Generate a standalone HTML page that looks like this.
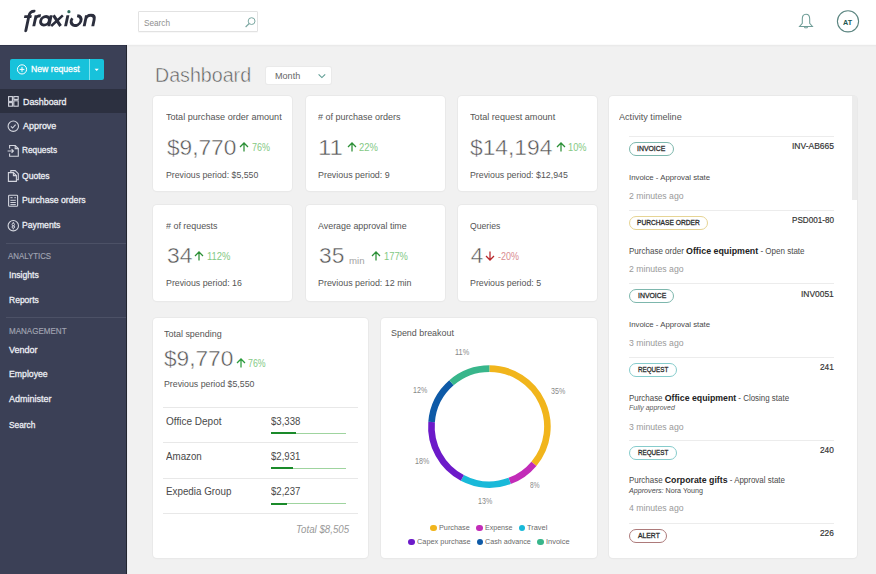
<!DOCTYPE html><html><head><meta charset="utf-8"><style>*{margin:0;padding:0;box-sizing:border-box}html,body{width:876px;height:574px;overflow:hidden;background:#f1f1f1;font-family:"Liberation Sans",sans-serif}.a{position:absolute;white-space:nowrap}</style></head><body><div class="a" style="left:0px;top:0px;width:876px;height:45px;background:#fff"></div><div class="a" style="left:0px;top:44px;width:876px;height:1px;background:#fbfbfb"></div><div class="a" style="left:0px;top:45px;width:876px;height:1px;background:#eaeaea"></div><div class="a" style="left:0px;top:46px;width:876px;height:1px;background:#eeeeee"></div><div class="a" style="left:0px;top:45px;width:126px;height:529px;background:#3b4056"></div><div class="a" style="left:125.5px;top:45px;width:1px;height:529px;background:#23262f"></div><div class="a" style="left:126.5px;top:45px;width:1px;height:529px;background:#e9eaf0"></div><div class="a" style="left:0px;top:45px;width:126px;height:1px;background:#30344a"></div><div class="a" style="left:0px;top:89px;width:126px;height:24px;background:#2c3040"></div><div class="a" style="left:10px;top:59px;width:94px;height:21px;background:#17c2db;border-radius:2px"></div><div class="a" style="left:89px;top:59px;width:1px;height:21px;background:#7fe3ef"></div><div class="a" style="left:6px;top:243px;width:120px;height:1px;background:#4c5166"></div><div class="a" style="left:6px;top:317px;width:120px;height:1px;background:#4c5166"></div><div class="a" style="left:153px;top:96px;width:139px;height:94.5px;background:#fff;border-radius:4px;box-shadow:0 0 0 1px #e9e9e9, 0 1px 2px rgba(0,0,0,0.03)"></div><div class="a" style="left:306px;top:96px;width:138.5px;height:94.5px;background:#fff;border-radius:4px;box-shadow:0 0 0 1px #e9e9e9, 0 1px 2px rgba(0,0,0,0.03)"></div><div class="a" style="left:458px;top:96px;width:139px;height:94.5px;background:#fff;border-radius:4px;box-shadow:0 0 0 1px #e9e9e9, 0 1px 2px rgba(0,0,0,0.03)"></div><div class="a" style="left:153px;top:205px;width:139px;height:95.5px;background:#fff;border-radius:4px;box-shadow:0 0 0 1px #e9e9e9, 0 1px 2px rgba(0,0,0,0.03)"></div><div class="a" style="left:306px;top:205px;width:138.5px;height:95.5px;background:#fff;border-radius:4px;box-shadow:0 0 0 1px #e9e9e9, 0 1px 2px rgba(0,0,0,0.03)"></div><div class="a" style="left:458px;top:205px;width:139px;height:95.5px;background:#fff;border-radius:4px;box-shadow:0 0 0 1px #e9e9e9, 0 1px 2px rgba(0,0,0,0.03)"></div><div class="a" style="left:608.5px;top:96px;width:248px;height:462px;background:#fff;border-radius:4px;box-shadow:0 0 0 1px #e9e9e9, 0 1px 2px rgba(0,0,0,0.03)"></div><div class="a" style="left:153px;top:318px;width:215px;height:240px;background:#fff;border-radius:4px;box-shadow:0 0 0 1px #e9e9e9, 0 1px 2px rgba(0,0,0,0.03)"></div><div class="a" style="left:381px;top:318px;width:216px;height:240px;background:#fff;border-radius:4px;box-shadow:0 0 0 1px #e9e9e9, 0 1px 2px rgba(0,0,0,0.03)"></div><div class="a" style="left:266px;top:67px;width:65px;height:17px;background:#fff;border-radius:2px;box-shadow:0 0 0 1px #eaeaea"></div><div class="a" style="left:138px;top:11px;width:120px;height:21px;background:#fff;border:1px solid #e2e2e2;border-radius:1px;box-shadow:0 1px 1px rgba(0,0,0,0.03)"></div><div class="a" style="left:163px;top:407px;width:195px;height:1px;background:#e8e8e8"></div><div class="a" style="left:163px;top:442px;width:195px;height:1px;background:#e8e8e8"></div><div class="a" style="left:163px;top:478px;width:195px;height:1px;background:#e8e8e8"></div><div class="a" style="left:163px;top:513px;width:195px;height:1px;background:#e8e8e8"></div><div class="a" style="left:271px;top:432.9px;width:75px;height:1px;background:#9fd49f"></div><div class="a" style="left:271px;top:432.4px;width:25.3px;height:2px;background:#1a8a2a"></div><div class="a" style="left:271px;top:467.9px;width:75px;height:1px;background:#9fd49f"></div><div class="a" style="left:271px;top:467.4px;width:22.3px;height:2px;background:#1a8a2a"></div><div class="a" style="left:271px;top:503.1px;width:75px;height:1px;background:#9fd49f"></div><div class="a" style="left:271px;top:502.6px;width:16.4px;height:2px;background:#1a8a2a"></div><div class="a" style="left:430.4px;top:524.5px;width:6.6px;height:6.6px;background:#f1b51c;border-radius:50%"></div><div class="a" style="left:476.0px;top:524.5px;width:6.6px;height:6.6px;background:#c22cb8;border-radius:50%"></div><div class="a" style="left:518.7px;top:524.5px;width:6.6px;height:6.6px;background:#19b9d9;border-radius:50%"></div><div class="a" style="left:408.2px;top:538.8000000000001px;width:6.6px;height:6.6px;background:#6c1ac9;border-radius:50%"></div><div class="a" style="left:476.5px;top:538.8000000000001px;width:6.6px;height:6.6px;background:#0e5aa7;border-radius:50%"></div><div class="a" style="left:537.2px;top:538.8000000000001px;width:6.6px;height:6.6px;background:#38b68b;border-radius:50%"></div><div class="a" style="left:851.5px;top:96px;width:5px;height:104px;background:#ececec"></div><div class="a" style="left:629px;top:136px;width:205px;height:1px;background:#ececec"></div><div class="a" style="left:629px;top:210px;width:205px;height:1px;background:#ececec"></div><div class="a" style="left:629px;top:283px;width:205px;height:1px;background:#ececec"></div><div class="a" style="left:629px;top:357px;width:205px;height:1px;background:#ececec"></div><div class="a" style="left:629px;top:440px;width:205px;height:1px;background:#ececec"></div><div class="a" style="left:629px;top:523px;width:205px;height:1px;background:#ececec"></div><div class="a" style="left:628.7px;top:141.6px;width:45.3px;height:14.5px;border:1.4px solid #7db7ad;border-radius:8px;background:#fff"></div><div class="a" style="left:628.7px;top:215.5px;width:79.8px;height:14.5px;border:1.4px solid #e6d494;border-radius:8px;background:#fff"></div><div class="a" style="left:629px;top:288.8px;width:45px;height:14.5px;border:1.4px solid #7db7ad;border-radius:8px;background:#fff"></div><div class="a" style="left:629px;top:362.5px;width:48.2px;height:14.5px;border:1.4px solid #86cccc;border-radius:8px;background:#fff"></div><div class="a" style="left:629px;top:445.8px;width:48.2px;height:14.5px;border:1.4px solid #86cccc;border-radius:8px;background:#fff"></div><div class="a" style="left:629px;top:528.6px;width:37.8px;height:14.5px;border:1.4px solid #ad7a7a;border-radius:8px;background:#fff"></div><svg class="a" style="left:238.5px;top:142.4px" width="10" height="10" viewBox="0 0 10 10"><path d="M5 9.5V1M1 5L5 1L9 5" fill="none" stroke="#2b8f36" stroke-width="1.25"/></svg><svg class="a" style="left:346.5px;top:142.4px" width="10" height="10" viewBox="0 0 10 10"><path d="M5 9.5V1M1 5L5 1L9 5" fill="none" stroke="#2b8f36" stroke-width="1.25"/></svg><svg class="a" style="left:555.5px;top:142.4px" width="10" height="10" viewBox="0 0 10 10"><path d="M5 9.5V1M1 5L5 1L9 5" fill="none" stroke="#2b8f36" stroke-width="1.25"/></svg><svg class="a" style="left:194.1px;top:250.9px" width="10" height="10" viewBox="0 0 10 10"><path d="M5 9.5V1M1 5L5 1L9 5" fill="none" stroke="#2b8f36" stroke-width="1.25"/></svg><svg class="a" style="left:371.3px;top:250.9px" width="10" height="10" viewBox="0 0 10 10"><path d="M5 9.5V1M1 5L5 1L9 5" fill="none" stroke="#2b8f36" stroke-width="1.25"/></svg><svg class="a" style="left:485.4px;top:250.9px" width="10" height="10" viewBox="0 0 10 10"><path d="M5 0.5V9M1 5L5 9L9 5" fill="none" stroke="#b8262b" stroke-width="1.25"/></svg><svg class="a" style="left:236px;top:358px" width="10" height="10" viewBox="0 0 10 10"><path d="M5 9.5V1M1 5L5 1L9 5" fill="none" stroke="#2a9b3b" stroke-width="1.25"/></svg><svg class="a" style="left:0;top:0" width="876" height="574"><path d="M489.40 368.60A58 58 0 0 1 533.90 463.80" fill="none" stroke="#f1b51c" stroke-width="6.6"/><path d="M533.90 463.80A58 58 0 0 1 509.63 480.96" fill="none" stroke="#c22cb8" stroke-width="6.6"/><path d="M509.63 480.96A58 58 0 0 1 462.32 477.89" fill="none" stroke="#19b9d9" stroke-width="6.6"/><path d="M462.32 477.89A58 58 0 0 1 431.59 421.91" fill="none" stroke="#6c1ac9" stroke-width="6.6"/><path d="M431.59 421.91A58 58 0 0 1 451.48 382.71" fill="none" stroke="#0e5aa7" stroke-width="6.6"/><path d="M451.48 382.71A58 58 0 0 1 489.40 368.60" fill="none" stroke="#38b68b" stroke-width="6.6"/></svg><svg class="a" style="left:0;top:0" width="110" height="44" viewBox="0 0 110 44"><g transform="translate(0 26) skewX(-12) translate(0 -26)" fill="none" stroke="#2b2e3d" stroke-width="2.9"><path d="M26.8 30.8V15.6C26.8 12.6 28.2 11.2 30.9 11.2" stroke-linecap="round"/><path d="M22.2 16.6H29.6"/><path d="M33.8 26.2V15.2M33.8 20.4C33.8 16.8 35.5 15.7 38.6 15.7" /><circle cx="43.9" cy="20.8" r="4.3"/><path d="M48.9 15.2V26.2"/><path d="M51.2 15.4L60.6 26M60.6 15.4L51.2 26" stroke-width="2.8"/><path d="M65.6 15.2V26.2"/><path d="M75.00 15.75A4.9 4.9 0 1 1 70.71 18.22"/><path d="M84.2 26.2V15.2M84.2 19.8C84.2 16.6 86 15.3 88.5 15.3C91.3 15.3 92.8 16.9 92.8 19.8V26.2"/></g><circle cx="68.9" cy="11.7" r="1.6" fill="#2e6b5c"/></svg><svg class="a" style="left:0;top:45px" width="126" height="200" viewBox="0 45 126 200"><circle cx="22" cy="69.4" r="4.6" fill="none" stroke="#fff" stroke-width="1"/><path d="M22 67V71.8M19.6 69.4H24.4" stroke="#fff" stroke-width="1"/><path d="M94.6 68.8H98.8L96.7 71Z" fill="#fff"/><g fill="none" stroke="#d3d5de" stroke-width="1.1"><rect x="8.6" y="96.6" width="3.8" height="4.8"/><rect x="13.8" y="96.6" width="4.4" height="2.8"/><rect x="8.6" y="102.6" width="3.8" height="3.6"/><rect x="13.8" y="100.8" width="4.4" height="5.4"/><circle cx="13.3" cy="126.2" r="5.2"/><path d="M10.9 126.4L12.6 128L15.6 124.6"/><path d="M9.6 148.6V145.5H15.2L18.3 148.6V156.2H9.6V153.4"/><path d="M15.2 145.5V148.6H18.3"/><path d="M7.6 151H13.4M11.6 149.2L13.4 151L11.6 152.8"/><path d="M8.4 172.6H13.4L16.4 175.6V181.4H8.4Z"/><path d="M13.4 172.6V175.6H16.4"/><path d="M10.8 172.6V170.6H15.2L18.3 173.7V179.8H16.4"/><rect x="8.6" y="195.3" width="9" height="11" rx="0.8"/><path d="M10.4 197.7H12.6M14.4 197.7H15.8M10.4 200.3H15.8M10.4 202.5H15.8M10.4 204.6H15.8" stroke-width="1"/><circle cx="13.3" cy="225.7" r="5.2"/><ellipse cx="13.3" cy="224.5" rx="1.2" ry="1.3" stroke-width="1"/><ellipse cx="13.3" cy="227" rx="1.2" ry="1.3" stroke-width="1"/><path d="M13.3 222V223.2M13.3 228.3V229.5" stroke-width="0.9"/></g></svg><svg class="a" style="left:244px;top:16px" width="13" height="12" viewBox="0 0 13 12"><circle cx="7.6" cy="5.1" r="3.4" fill="none" stroke="#7aa7a1" stroke-width="1"/><path d="M5.2 7.5L1.6 11" stroke="#7aa7a1" stroke-width="1.1"/></svg><svg class="a" style="left:798px;top:12px" width="16" height="18" viewBox="0 0 16 18"><path d="M8 2.2C5.2 2.2 4.3 4.4 4.3 7V11.4L1.6 14.4H14.4L11.7 11.4V7C11.7 4.4 10.8 2.2 8 2.2Z" fill="none" stroke="#6f9d97" stroke-width="1.05"/><path d="M6.6 14.6V15.8H9.4V14.6" fill="none" stroke="#6f9d97" stroke-width="1"/></svg><svg class="a" style="left:836px;top:9px" width="24" height="24" viewBox="0 0 24 24"><circle cx="12" cy="12.3" r="10.6" fill="none" stroke="#5b8580" stroke-width="1.1"/></svg><svg class="a" style="left:317px;top:73px" width="10" height="6" viewBox="0 0 10 6"><path d="M1.6 1.4L4.9 4.6L8.2 1.4" fill="none" stroke="#5d9c93" stroke-width="1.1"/></svg><div class="a" id="t0" style="left:144.40px;top:18.88px;font-size:9px;line-height:9px;color:#8f8f8f;font-weight:400;font-style:normal;transform:scaleX(0.9119);transform-origin:0 0;">Search</div><div class="a" id="t1" style="left:843.00px;top:19.81px;font-size:6.6px;line-height:6.6px;color:#24564f;font-weight:700;font-style:normal;transform:scaleX(1.0880);transform-origin:0 0;">AT</div><div class="a" id="t2" style="left:155.02px;top:65.07px;font-size:20px;line-height:20px;color:#5e5e5e;font-weight:400;font-style:normal;transform:scaleX(0.9820);transform-origin:0 0;-webkit-text-stroke:0.5px #f1f1f1;">Dashboard</div><div class="a" id="t3" style="left:275.00px;top:71.55px;font-size:8.8px;line-height:8.8px;color:#666;font-weight:400;font-style:normal;transform:scaleX(1.0303);transform-origin:0 0;">Month</div><div class="a" id="t4" style="left:30.80px;top:64.81px;font-size:9.2px;line-height:9.2px;color:#ffffff;font-weight:400;font-style:normal;transform:scaleX(0.9438);transform-origin:0 0;-webkit-text-stroke:0.3px #fff;">New request</div><div class="a" id="t5" style="left:22.80px;top:96.54px;font-size:9.4px;line-height:9.4px;color:#eceef4;font-weight:400;font-style:normal;transform:scaleX(0.9463);transform-origin:0 0;-webkit-text-stroke:0.3px #eceef4;">Dashboard</div><div class="a" id="t6" style="left:22.80px;top:121.04px;font-size:9.4px;line-height:9.4px;color:#eceef4;font-weight:400;font-style:normal;transform:scaleX(0.9538);transform-origin:0 0;-webkit-text-stroke:0.3px #eceef4;">Approve</div><div class="a" id="t7" style="left:22.30px;top:145.44px;font-size:9.4px;line-height:9.4px;color:#eceef4;font-weight:400;font-style:normal;transform:scaleX(0.8843);transform-origin:0 0;-webkit-text-stroke:0.3px #eceef4;">Requests</div><div class="a" id="t8" style="left:22.30px;top:170.54px;font-size:9.4px;line-height:9.4px;color:#eceef4;font-weight:400;font-style:normal;transform:scaleX(0.9136);transform-origin:0 0;-webkit-text-stroke:0.3px #eceef4;">Quotes</div><div class="a" id="t9" style="left:21.70px;top:195.44px;font-size:9.4px;line-height:9.4px;color:#eceef4;font-weight:400;font-style:normal;transform:scaleX(0.9248);transform-origin:0 0;-webkit-text-stroke:0.3px #eceef4;">Purchase orders</div><div class="a" id="t10" style="left:22.30px;top:220.04px;font-size:9.4px;line-height:9.4px;color:#eceef4;font-weight:400;font-style:normal;transform:scaleX(0.9215);transform-origin:0 0;-webkit-text-stroke:0.3px #eceef4;">Payments</div><div class="a" id="t11" style="left:8.40px;top:252.08px;font-size:9px;line-height:9px;color:#a2a5b3;font-weight:400;font-style:normal;transform:scaleX(0.8735);transform-origin:0 0;-webkit-text-stroke:0.15px #a2a5b3;">ANALYTICS</div><div class="a" id="t12" style="left:9.10px;top:270.04px;font-size:9.4px;line-height:9.4px;color:#eceef4;font-weight:400;font-style:normal;transform:scaleX(0.9227);transform-origin:0 0;-webkit-text-stroke:0.3px #eceef4;">Insights</div><div class="a" id="t13" style="left:9.10px;top:295.34px;font-size:9.4px;line-height:9.4px;color:#eceef4;font-weight:400;font-style:normal;transform:scaleX(0.9083);transform-origin:0 0;-webkit-text-stroke:0.3px #eceef4;">Reports</div><div class="a" id="t14" style="left:8.60px;top:327.18px;font-size:9px;line-height:9px;color:#a2a5b3;font-weight:400;font-style:normal;transform:scaleX(0.8922);transform-origin:0 0;-webkit-text-stroke:0.15px #a2a5b3;">MANAGEMENT</div><div class="a" id="t15" style="left:9.00px;top:345.04px;font-size:9.4px;line-height:9.4px;color:#eceef4;font-weight:400;font-style:normal;transform:scaleX(0.9631);transform-origin:0 0;-webkit-text-stroke:0.3px #eceef4;">Vendor</div><div class="a" id="t16" style="left:9.10px;top:369.44px;font-size:9.4px;line-height:9.4px;color:#eceef4;font-weight:400;font-style:normal;transform:scaleX(0.9283);transform-origin:0 0;-webkit-text-stroke:0.3px #eceef4;">Employee</div><div class="a" id="t17" style="left:9.10px;top:394.24px;font-size:9.4px;line-height:9.4px;color:#eceef4;font-weight:400;font-style:normal;transform:scaleX(0.9578);transform-origin:0 0;-webkit-text-stroke:0.3px #eceef4;">Administer</div><div class="a" id="t18" style="left:9.10px;top:419.64px;font-size:9.4px;line-height:9.4px;color:#eceef4;font-weight:400;font-style:normal;transform:scaleX(0.8884);transform-origin:0 0;-webkit-text-stroke:0.3px #eceef4;">Search</div><div class="a" id="t19" style="left:166.30px;top:113.48px;font-size:9px;line-height:9px;color:#555;font-weight:400;font-style:normal;transform:scaleX(1.0099);transform-origin:0 0;">Total purchase order amount</div><div class="a" id="t20" style="left:166.60px;top:136.95px;font-size:22.5px;line-height:22.5px;color:#555;font-weight:400;font-style:normal;transform:scaleX(1.0072);transform-origin:0 0;-webkit-text-stroke:0.45px #fff;">$9,770</div><div class="a" id="t21" style="left:251.50px;top:143.13px;font-size:10px;line-height:10px;color:#84c984;font-weight:400;font-style:normal;transform:scaleX(0.8995);transform-origin:0 0;">76%</div><div class="a" id="t22" style="left:166.30px;top:170.68px;font-size:9px;line-height:9px;color:#555;font-weight:400;font-style:normal;transform:scaleX(0.9710);transform-origin:0 0;">Previous period: $5,550</div><div class="a" id="t23" style="left:318.30px;top:113.48px;font-size:9px;line-height:9px;color:#555;font-weight:400;font-style:normal;transform:scaleX(0.9994);transform-origin:0 0;"># of purchase orders</div><div class="a" id="t24" style="left:317.53px;top:136.95px;font-size:22.5px;line-height:22.5px;color:#555;font-weight:400;font-style:normal;transform:scaleX(1.0667);transform-origin:0 0;-webkit-text-stroke:0.45px #fff;">11</div><div class="a" id="t25" style="left:358.50px;top:143.13px;font-size:10px;line-height:10px;color:#84c984;font-weight:400;font-style:normal;transform:scaleX(0.9442);transform-origin:0 0;">22%</div><div class="a" id="t26" style="left:318.30px;top:170.68px;font-size:9px;line-height:9px;color:#555;font-weight:400;font-style:normal;transform:scaleX(0.9885);transform-origin:0 0;">Previous period: 9</div><div class="a" id="t27" style="left:470.00px;top:113.48px;font-size:9px;line-height:9px;color:#555;font-weight:400;font-style:normal;transform:scaleX(1.0136);transform-origin:0 0;">Total request amount</div><div class="a" id="t28" style="left:470.30px;top:136.95px;font-size:22.5px;line-height:22.5px;color:#555;font-weight:400;font-style:normal;transform:scaleX(1.0121);transform-origin:0 0;-webkit-text-stroke:0.45px #fff;">$14,194</div><div class="a" id="t29" style="left:568.40px;top:143.13px;font-size:10px;line-height:10px;color:#84c984;font-weight:400;font-style:normal;transform:scaleX(0.9243);transform-origin:0 0;">10%</div><div class="a" id="t30" style="left:470.00px;top:170.68px;font-size:9px;line-height:9px;color:#555;font-weight:400;font-style:normal;transform:scaleX(0.9774);transform-origin:0 0;">Previous period: $12,945</div><div class="a" id="t31" style="left:166.20px;top:221.98px;font-size:9px;line-height:9px;color:#555;font-weight:400;font-style:normal;transform:scaleX(0.9899);transform-origin:0 0;"># of requests</div><div class="a" id="t32" style="left:166.50px;top:245.45px;font-size:22.5px;line-height:22.5px;color:#555;font-weight:400;font-style:normal;transform:scaleX(1.0158);transform-origin:0 0;-webkit-text-stroke:0.45px #fff;">34</div><div class="a" id="t33" style="left:207.40px;top:251.64px;font-size:10px;line-height:10px;color:#84c984;font-weight:400;font-style:normal;transform:scaleX(0.9422);transform-origin:0 0;">112%</div><div class="a" id="t34" style="left:166.20px;top:279.18px;font-size:9px;line-height:9px;color:#555;font-weight:400;font-style:normal;transform:scaleX(0.9788);transform-origin:0 0;">Previous period: 16</div><div class="a" id="t35" style="left:318.30px;top:221.98px;font-size:9px;line-height:9px;color:#555;font-weight:400;font-style:normal;transform:scaleX(0.9869);transform-origin:0 0;">Average approval time</div><div class="a" id="t36" style="left:318.60px;top:245.45px;font-size:22.5px;line-height:22.5px;color:#555;font-weight:400;font-style:normal;transform:scaleX(1.0117);transform-origin:0 0;-webkit-text-stroke:0.45px #fff;">35</div><div class="a" id="t37" style="left:383.80px;top:251.64px;font-size:10px;line-height:10px;color:#84c984;font-weight:400;font-style:normal;transform:scaleX(0.9344);transform-origin:0 0;">177%</div><div class="a" id="t38" style="left:318.30px;top:279.18px;font-size:9px;line-height:9px;color:#555;font-weight:400;font-style:normal;transform:scaleX(0.9890);transform-origin:0 0;">Previous period: 12 min</div><div class="a" id="t39" style="left:348.80px;top:255.57px;font-size:9.6px;line-height:9.6px;color:#a3a3a3;font-weight:400;font-style:normal;transform:scaleX(1.0051);transform-origin:0 0;">min</div><div class="a" id="t40" style="left:470.40px;top:221.98px;font-size:9px;line-height:9px;color:#555;font-weight:400;font-style:normal;transform:scaleX(0.9621);transform-origin:0 0;">Queries</div><div class="a" id="t41" style="left:470.70px;top:245.45px;font-size:22.5px;line-height:22.5px;color:#555;font-weight:400;font-style:normal;-webkit-text-stroke:0.45px #fff;">4</div><div class="a" id="t42" style="left:498.00px;top:251.64px;font-size:10px;line-height:10px;color:#d98d90;font-weight:400;font-style:normal;transform:scaleX(0.8954);transform-origin:0 0;">-20%</div><div class="a" id="t43" style="left:470.40px;top:279.18px;font-size:9px;line-height:9px;color:#555;font-weight:400;font-style:normal;transform:scaleX(0.9802);transform-origin:0 0;">Previous period: 5</div><div class="a" id="t44" style="left:163.60px;top:329.58px;font-size:9px;line-height:9px;color:#555;font-weight:400;font-style:normal;transform:scaleX(0.9942);transform-origin:0 0;">Total spending</div><div class="a" id="t45" style="left:163.90px;top:348.35px;font-size:22.5px;line-height:22.5px;color:#555;font-weight:400;font-style:normal;transform:scaleX(1.0058);transform-origin:0 0;-webkit-text-stroke:0.45px #fff;">$9,770</div><div class="a" id="t46" style="left:248.30px;top:358.94px;font-size:10px;line-height:10px;color:#84c984;font-weight:400;font-style:normal;transform:scaleX(0.8796);transform-origin:0 0;">76%</div><div class="a" id="t47" style="left:163.60px;top:380.38px;font-size:9px;line-height:9px;color:#555;font-weight:400;font-style:normal;transform:scaleX(0.9767);transform-origin:0 0;">Previous period $5,550</div><div class="a" id="t48" style="left:166.40px;top:416.60px;font-size:10.4px;line-height:10.4px;color:#4a4a4a;font-weight:400;font-style:normal;transform:scaleX(0.9640);transform-origin:0 0;">Office Depot</div><div class="a" id="t49" style="left:271.20px;top:416.90px;font-size:10.4px;line-height:10.4px;color:#4a4a4a;font-weight:400;font-style:normal;transform:scaleX(0.9249);transform-origin:0 0;">$3,338</div><div class="a" id="t50" style="left:166.40px;top:451.60px;font-size:10.4px;line-height:10.4px;color:#4a4a4a;font-weight:400;font-style:normal;transform:scaleX(0.9390);transform-origin:0 0;">Amazon</div><div class="a" id="t51" style="left:271.20px;top:451.90px;font-size:10.4px;line-height:10.4px;color:#4a4a4a;font-weight:400;font-style:normal;transform:scaleX(0.9249);transform-origin:0 0;">$2,931</div><div class="a" id="t52" style="left:166.40px;top:486.80px;font-size:10.4px;line-height:10.4px;color:#4a4a4a;font-weight:400;font-style:normal;transform:scaleX(0.9434);transform-origin:0 0;">Expedia Group</div><div class="a" id="t53" style="left:271.20px;top:487.10px;font-size:10.4px;line-height:10.4px;color:#4a4a4a;font-weight:400;font-style:normal;transform:scaleX(0.9249);transform-origin:0 0;">$2,237</div><div class="a" id="t54" style="left:296.00px;top:525.43px;font-size:10px;line-height:10px;color:#9a9a9a;font-weight:400;font-style:italic;transform:scaleX(0.9707);transform-origin:0 0;">Total $8,505</div><div class="a" id="t55" style="left:390.80px;top:329.38px;font-size:9px;line-height:9px;color:#555;font-weight:400;font-style:normal;transform:scaleX(0.9899);transform-origin:0 0;">Spend breakout</div><div class="a" id="t56" style="left:454.90px;top:348.20px;font-size:8.5px;line-height:8.5px;color:#888;font-weight:400;font-style:normal;transform:scaleX(0.8678);transform-origin:0 0;">11%</div><div class="a" id="t57" style="left:551.10px;top:386.80px;font-size:8.5px;line-height:8.5px;color:#888;font-weight:400;font-style:normal;transform:scaleX(0.8365);transform-origin:0 0;">35%</div><div class="a" id="t58" style="left:530.40px;top:480.90px;font-size:8.5px;line-height:8.5px;color:#888;font-weight:400;font-style:normal;transform:scaleX(0.7700);transform-origin:0 0;">8%</div><div class="a" id="t59" style="left:478.30px;top:496.60px;font-size:8.5px;line-height:8.5px;color:#888;font-weight:400;font-style:normal;transform:scaleX(0.8365);transform-origin:0 0;">13%</div><div class="a" id="t60" style="left:414.90px;top:457.20px;font-size:8.5px;line-height:8.5px;color:#888;font-weight:400;font-style:normal;transform:scaleX(0.8365);transform-origin:0 0;">18%</div><div class="a" id="t61" style="left:413.10px;top:386.20px;font-size:8.5px;line-height:8.5px;color:#888;font-weight:400;font-style:normal;transform:scaleX(0.8365);transform-origin:0 0;">12%</div><div class="a" id="t62" style="left:439.00px;top:523.93px;font-size:8px;line-height:8px;color:#6a6a6a;font-weight:400;font-style:normal;transform:scaleX(0.9113);transform-origin:0 0;">Purchase</div><div class="a" id="t63" style="left:484.60px;top:523.93px;font-size:8px;line-height:8px;color:#6a6a6a;font-weight:400;font-style:normal;transform:scaleX(0.8837);transform-origin:0 0;">Expense</div><div class="a" id="t64" style="left:527.00px;top:523.93px;font-size:8px;line-height:8px;color:#6a6a6a;font-weight:400;font-style:normal;transform:scaleX(0.9254);transform-origin:0 0;">Travel</div><div class="a" id="t65" style="left:416.80px;top:538.23px;font-size:8px;line-height:8px;color:#6a6a6a;font-weight:400;font-style:normal;transform:scaleX(0.9199);transform-origin:0 0;">Capex purchase</div><div class="a" id="t66" style="left:485.30px;top:538.23px;font-size:8px;line-height:8px;color:#6a6a6a;font-weight:400;font-style:normal;transform:scaleX(0.8937);transform-origin:0 0;">Cash advance</div><div class="a" id="t67" style="left:545.90px;top:538.23px;font-size:8px;line-height:8px;color:#6a6a6a;font-weight:400;font-style:normal;transform:scaleX(0.9306);transform-origin:0 0;">Invoice</div><div class="a" id="t68" style="left:619.20px;top:113.18px;font-size:9px;line-height:9px;color:#555;font-weight:400;font-style:normal;transform:scaleX(1.0111);transform-origin:0 0;">Activity timeline</div><div class="a" id="t69" style="left:637.40px;top:145.10px;font-size:7.8px;line-height:7.8px;color:#2a2a2a;font-weight:400;font-style:normal;transform:scaleX(0.8852);transform-origin:0 0;-webkit-text-stroke:0.3px #2a2a2a;">INVOICE</div><div class="a" id="t70" style="left:792.20px;top:142.18px;font-size:9px;line-height:9px;color:#333;font-weight:400;font-style:normal;transform:scaleX(0.9434);transform-origin:0 0;-webkit-text-stroke:0.18px #333;">INV-AB665</div><div class="a" id="t71" style="left:629.00px;top:173.53px;font-size:8px;line-height:8px;color:#4a4a4a;font-weight:400;font-style:normal;transform:scaleX(0.9745);transform-origin:0 0;">Invoice - Approval state</div><div class="a" id="t72" style="left:629.00px;top:191.98px;font-size:9px;line-height:9px;color:#9a9a9a;font-weight:400;font-style:normal;transform:scaleX(0.9659);transform-origin:0 0;">2 minutes ago</div><div class="a" id="t73" style="left:637.40px;top:219.00px;font-size:7.8px;line-height:7.8px;color:#2a2a2a;font-weight:400;font-style:normal;transform:scaleX(0.8512);transform-origin:0 0;-webkit-text-stroke:0.3px #2a2a2a;">PURCHASE ORDER</div><div class="a" id="t74" style="left:792.20px;top:215.68px;font-size:9px;line-height:9px;color:#333;font-weight:400;font-style:normal;transform:scaleX(0.9028);transform-origin:0 0;-webkit-text-stroke:0.18px #333;">PSD001-80</div><div class="a" id="t75" style="left:628.66px;top:246.69px;font-size:8.4px;line-height:8.4px;color:#4a4a4a;font-weight:400;font-style:normal;transform:scaleX(0.9570);transform-origin:0 0;">Purchase order <b style="font-size:1.1em;color:#222">Office equipment</b> - Open state</div><div class="a" id="t76" style="left:629.00px;top:264.88px;font-size:9px;line-height:9px;color:#9a9a9a;font-weight:400;font-style:normal;transform:scaleX(0.9659);transform-origin:0 0;">2 minutes ago</div><div class="a" id="t77" style="left:637.70px;top:292.30px;font-size:7.8px;line-height:7.8px;color:#2a2a2a;font-weight:400;font-style:normal;transform:scaleX(0.8852);transform-origin:0 0;-webkit-text-stroke:0.3px #2a2a2a;">INVOICE</div><div class="a" id="t78" style="left:801.40px;top:289.68px;font-size:9px;line-height:9px;color:#333;font-weight:400;font-style:normal;transform:scaleX(0.9366);transform-origin:0 0;-webkit-text-stroke:0.18px #333;">INV0051</div><div class="a" id="t79" style="left:629.00px;top:320.53px;font-size:8px;line-height:8px;color:#4a4a4a;font-weight:400;font-style:normal;transform:scaleX(0.9745);transform-origin:0 0;">Invoice - Approval state</div><div class="a" id="t80" style="left:629.00px;top:339.18px;font-size:9px;line-height:9px;color:#9a9a9a;font-weight:400;font-style:normal;transform:scaleX(0.9659);transform-origin:0 0;">3 minutes ago</div><div class="a" id="t81" style="left:637.70px;top:366.00px;font-size:7.8px;line-height:7.8px;color:#2a2a2a;font-weight:400;font-style:normal;transform:scaleX(0.8042);transform-origin:0 0;-webkit-text-stroke:0.3px #2a2a2a;">REQUEST</div><div class="a" id="t82" style="left:820.40px;top:363.18px;font-size:9px;line-height:9px;color:#333;font-weight:400;font-style:normal;transform:scaleX(0.9193);transform-origin:0 0;-webkit-text-stroke:0.18px #333;">241</div><div class="a" id="t83" style="left:628.66px;top:394.19px;font-size:8.4px;line-height:8.4px;color:#4a4a4a;font-weight:400;font-style:normal;transform:scaleX(0.9470);transform-origin:0 0;">Purchase <b style="font-size:1.1em;color:#222">Office equipment</b> - Closing state</div><div class="a" id="t84" style="left:629.00px;top:403.85px;font-size:7.5px;line-height:7.5px;color:#5a5a5a;font-weight:400;font-style:italic;transform:scaleX(0.9316);transform-origin:0 0;">Fully approved</div><div class="a" id="t85" style="left:629.00px;top:422.68px;font-size:9px;line-height:9px;color:#9a9a9a;font-weight:400;font-style:normal;transform:scaleX(0.9659);transform-origin:0 0;">3 minutes ago</div><div class="a" id="t86" style="left:637.70px;top:449.30px;font-size:7.8px;line-height:7.8px;color:#2a2a2a;font-weight:400;font-style:normal;transform:scaleX(0.8042);transform-origin:0 0;-webkit-text-stroke:0.3px #2a2a2a;">REQUEST</div><div class="a" id="t87" style="left:820.40px;top:446.18px;font-size:9px;line-height:9px;color:#333;font-weight:400;font-style:normal;transform:scaleX(0.9193);transform-origin:0 0;-webkit-text-stroke:0.18px #333;">240</div><div class="a" id="t88" style="left:628.66px;top:476.49px;font-size:8.4px;line-height:8.4px;color:#4a4a4a;font-weight:400;font-style:normal;transform:scaleX(0.9483);transform-origin:0 0;">Purchase <b style="font-size:1.1em;color:#222">Corporate gifts</b> - Approval state</div><div class="a" id="t89" style="left:628.70px;top:486.65px;font-size:7.5px;line-height:7.5px;color:#4a4a4a;font-weight:400;font-style:normal;transform:scaleX(0.9535);transform-origin:0 0;"><i>Approvers:</i> Nora Young</div><div class="a" id="t90" style="left:629.00px;top:504.28px;font-size:9px;line-height:9px;color:#9a9a9a;font-weight:400;font-style:normal;transform:scaleX(0.9659);transform-origin:0 0;">4 minutes ago</div><div class="a" id="t91" style="left:637.70px;top:532.10px;font-size:7.8px;line-height:7.8px;color:#2a2a2a;font-weight:400;font-style:normal;transform:scaleX(0.8721);transform-origin:0 0;-webkit-text-stroke:0.3px #2a2a2a;">ALERT</div><div class="a" id="t92" style="left:820.40px;top:528.98px;font-size:9px;line-height:9px;color:#333;font-weight:400;font-style:normal;transform:scaleX(0.9193);transform-origin:0 0;-webkit-text-stroke:0.18px #333;">226</div></body></html>
